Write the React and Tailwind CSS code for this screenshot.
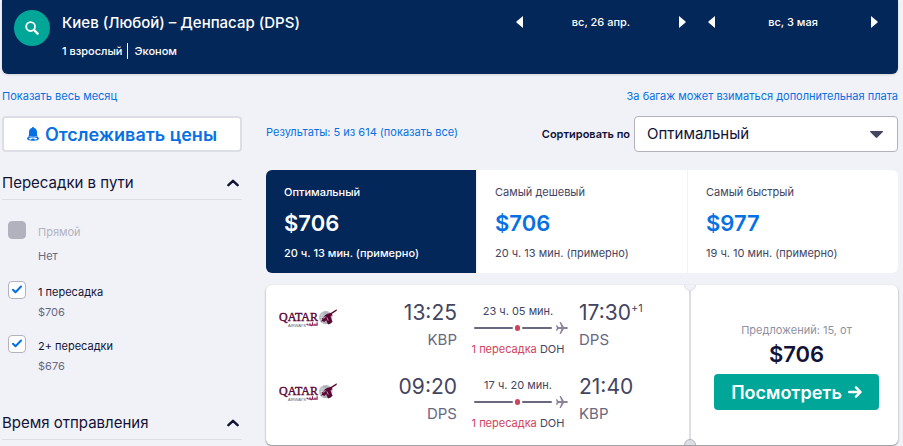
import React, { useState } from 'react';

const legs = [
  {
    depart: '13:25',
    from: 'KBP',
    duration: '23 ч. 05 мин.',
    arrive: '17:30',
    extraDays: '+1',
    to: 'DPS',
  },
  {
    depart: '09:20',
    from: 'DPS',
    duration: '17 ч. 20 мин.',
    arrive: '21:40',
    to: 'KBP',
  },
];

const sortTabs = [
  { id: 'best', label: 'Оптимальный', price: '$706', time: '20 ч. 13 мин. (примерно)' },
  { id: 'cheapest', label: 'Самый дешевый', price: '$706', time: '20 ч. 13 мин. (примерно)' },
  { id: 'fastest', label: 'Самый быстрый', price: '$977', time: '19 ч. 10 мин. (примерно)' },
];

const DatePicker = ({ date }) => (
  <div className="flex w-[170px] items-center justify-between text-white">
    <button type="button" aria-label="Предыдущий день" className="flex h-6 items-center">
      <svg width="7" height="12" viewBox="0 0 7 12" fill="currentColor">
        <path d="M7 0v12L0.5 6.6a0.9 0.9 0 0 1 0-1.2z" />
      </svg>
    </button>
    <span className="text-[11px] font-medium">{date}</span>
    <button type="button" aria-label="Следующий день" className="flex h-6 items-center">
      <svg width="7" height="12" viewBox="0 0 7 12" fill="currentColor">
        <path d="M0 0v12l6.5-5.4a0.9 0.9 0 0 0 0-1.2z" />
      </svg>
    </button>
  </div>
);

const SearchHeader = () => (
  <header className="flex h-[74px] items-start justify-between rounded-b-md bg-[#042759] pt-[10px] pr-5 pl-3 text-white shadow">
    <div className="flex">
      <button
        type="button"
        aria-label="Поиск"
        className="flex h-9 w-9 items-center justify-center rounded-full bg-[#00a698]"
      >
        <svg width="14" height="14" viewBox="0 0 14 14" fill="none" stroke="currentColor">
          <circle cx="5.6" cy="5.6" r="4.4" strokeWidth="1.8" />
          <path d="M9 9l3.6 3.6" strokeWidth="2.4" strokeLinecap="round" />
        </svg>
      </button>
      <div className="ml-3 pt-px">
        <h1 className="text-[15px] leading-6 font-medium">Киев (Любой) – Денпасар (DPS)</h1>
        <p className="mt-2 flex items-center text-[11px] leading-4 font-medium">
          <span className="border-r border-white pr-[5px]">1 взрослый</span>
          <span className="pl-[6px]">Эконом</span>
        </p>
      </div>
    </div>
    <div className="flex gap-[22px]">
      <DatePicker date="вс, 26 апр." />
      <DatePicker date="вс, 3 мая" />
    </div>
  </header>
);

const FilterHeading = ({ children }) => (
  <h2 className="border-b border-[#dddde5]">
    <button
      type="button"
      className="flex h-8 w-full items-center justify-between pr-[3px] text-left text-[15px] text-[#111236]"
    >
      {children}
      <svg width="12" height="8" viewBox="0 0 12 8" fill="none" stroke="currentColor">
        <path d="M1.4 6.2L6 1.8l4.6 4.4" strokeWidth="2.4" strokeLinecap="round" strokeLinejoin="round" />
      </svg>
    </button>
  </h2>
);

const StopFilter = ({ id, label, price, checked, disabled, onChange }) => (
  <div className="flex gap-3">
    <span className="relative flex h-[18px] w-[18px]">
      <input
        id={id}
        type="checkbox"
        checked={checked}
        disabled={disabled}
        onChange={onChange}
        className="h-[18px] w-[18px] appearance-none rounded border border-[#b2b2bf] bg-white disabled:bg-[#b2b2bf]"
      />
      {checked && (
        <svg
          className="pointer-events-none absolute top-1 left-1"
          width="10"
          height="9"
          viewBox="0 0 10 9"
          fill="none"
          stroke="#0770e3"
        >
          <path d="M1 4.8l2.5 2.4L9 1.5" strokeWidth="2" strokeLinecap="round" strokeLinejoin="round" />
        </svg>
      )}
    </span>
    <div className="pt-[2px] text-[11px]">
      <label htmlFor={id} className={`block leading-[18px] ${disabled ? 'text-[#b2b2bf]' : 'text-[#111236]'}`}>
        {label}
      </label>
      <span className={`block leading-[22px] text-[#68697f] ${disabled ? 'mt-1' : ''}`}>{price}</span>
    </div>
  </div>
);

const Sidebar = () => {
  const [oneStop, setOneStop] = useState(true);
  const [twoStops, setTwoStops] = useState(true);

  return (
    <aside className="w-60 shrink-0">
      <button
        type="button"
        className="flex h-9 w-full items-center justify-center gap-[6px] rounded border-2 border-[#dddde5] bg-white text-[18px] font-semibold text-[#0770e3]"
      >
        <svg width="12" height="14" viewBox="0 0 12 14" fill="currentColor">
          <path d="M6 0c.7 0 1.1.4 1.2 1C9 1.6 10 3.1 10 5v2.4c0 1 .6 1.8 1.4 2.5C9.9 9.2 8 8.9 6 8.9s-3.9.3-5.4 1C1.4 9.2 2 8.4 2 7.400V5c0-1.900 1-3.400 2.800-4C4.900.4 5.300 0 6 0z" />
          <path d="M6 9.3c3.3 0 6 .9 6 2.2s-2.700 2.300-6 2.300-6-1-6-2.300 2.700-2.200 6-2.200zm0 1.100c-2.500 0-4.300.5-4.300 1.100 0 .5 1 .9 2.600 1.100.2-.6.9-1 1.700-1s1.500.4 1.700 1c1.600-.2 2.600-.6 2.600-1.100 0-.6-1.800-1.100-4.300-1.100z" />
        </svg>
        Отслеживать цены
      </button>

      <div className="mt-[15px]">
        <FilterHeading>Пересадки в пути</FilterHeading>
        <div className="mt-[21px] flex flex-col gap-3 pl-[6px]">
          <div className="pb-[2px]">
            <StopFilter id="stops-direct" label="Прямой" price="Нет" checked={false} disabled />
          </div>
          <StopFilter
            id="stops-one"
            label="1 пересадка"
            price="$706"
            checked={oneStop}
            onChange={(e) => setOneStop(e.target.checked)}
          />
          <StopFilter
            id="stops-two"
            label="2+ пересадки"
            price="$676"
            checked={twoStops}
            onChange={(e) => setTwoStops(e.target.checked)}
          />
        </div>
      </div>

      <div className="mt-[30px]">
        <FilterHeading>Время отправления</FilterHeading>
      </div>
    </aside>
  );
};

const QatarLogo = () => (
  <svg width="58" height="18" viewBox="0 0 58 18" role="img" aria-label="Qatar Airways">
    <text
      x="0"
      y="11.5"
      fontFamily="Liberation Serif, serif"
      fontSize="12"
      fill="#5c0632"
      stroke="#5c0632"
      strokeWidth="0.4"
    >
      QATAR
    </text>
    <text x="9" y="17.6" fontFamily="Liberation Sans, sans-serif" fontSize="4" fill="#5b5b6b">
      AIRWAYS
    </text>
    <path
      d="M27.5 16v-1.2h1.500v.8h1.500v-1.400h1v1.400h1.500v-2.400h1v2.400h1.500v-1h1v1h1v-2.400h1.200v3.500H33l-.8.8-.8-.8z"
      fill="#8b2252"
    />
    <circle cx="46.8" cy="8.600" r="6.700" fill="#adb4ba" />
    <path
      d="M41 6h11M40.300 8.600h13M41 11.300h11M44 3c-2 3.500-2 8 0 11.500M49 3c2 3.500 2 8 0 11.500"
      stroke="#dfe2e5"
      strokeWidth="0.6"
      fill="none"
    />
    {/* oryx head and horns */}
    <path
      d="M57.600.2l.2 1.500-5 3.300 1 1.300-2.200.6c.2 2 1 3.700 2 5.600-1 1.500-2.600 2.600-4.600 3l-1.800-4.300-2.200 2-.8-1.300-2.700.9 2-2.300-1-.8 2.600-1.500.8-2 2.600-1.500 3.200-.7z"
      fill="#5c0632"
    />
    <path d="M44.500 9.800l2.300-2.400M48 8.500l1.200 3" stroke="#fff" strokeWidth="0.6" fill="none" />
  </svg>
);

const Leg = ({ leg }) => (
  <div className="flex h-[74px] items-start">
    <div className="w-20 pt-[10px]">
      <QatarLogo />
    </div>
    <div className="flex-1 text-right">
      <div className="text-[21px] leading-7 text-[#444560]">{leg.depart}</div>
      <div className="text-[15px] leading-[26px] text-[#68697f]">{leg.from}</div>
    </div>
    <div className="w-[122px] px-[11px] pt-1 text-center text-[11px]">
      <div className="leading-4 text-[#444560]">{leg.duration}</div>
      <div className="ml-[6px] flex h-[18px] items-center">
        <span className="h-[2px] w-[39px] rounded-full bg-[#68697f]" />
        <span className="mx-[2px] h-[6px] w-[6px] rounded-full bg-[#d1435b]" />
        <span className="h-[2px] w-[30px] rounded-full bg-[#68697f]" />
        <svg className="ml-1" width="12" height="12" viewBox="0 0 12 12" fill="#8a8399">
          <path d="M0 3.200h1.100L2.500 5h3L3.600 0h1.300L8 5h2.600c.8 0 1.400.4 1.400 1s-.6 1-1.400 1H8l-3.100 5H3.600l1.900-5h-3L1.100 8.800H0L.8 6z" />
        </svg>
      </div>
      <div className="mt-1 leading-4 whitespace-nowrap text-[#444560]">
        <span className="text-[#d1435b]">1 пересадка</span> DOH
      </div>
    </div>
    <div className="w-[110px]">
      <div className="flex text-[21px] leading-7 text-[#444560]">
        {leg.arrive}
        {leg.extraDays && <sup className="top-0 text-[11px] leading-[18px]">{leg.extraDays}</sup>}
      </div>
      <div className="text-[15px] leading-[26px] text-[#68697f]">{leg.to}</div>
    </div>
  </div>
);

const Ticket = () => (
  <article className="relative mt-3 flex h-40 overflow-hidden rounded-md bg-white shadow-[0_1px_2px_rgba(0,0,0,0.45)]">
    <div className="flex-1 pt-[14px] pl-[13px]">
      {legs.map((leg) => (
        <Leg key={leg.depart} leg={leg} />
      ))}
    </div>
    <div className="relative flex w-[209px] flex-col items-center border-l-2 border-[#dddde5] pt-9 pr-[19px] pl-[23px]">
      <span className="absolute -top-[6px] -left-[7px] h-3 w-3 rounded-full border border-[#dddde5] bg-[#f1f2f8]" />
      <span className="absolute -bottom-[6px] -left-[7px] h-3 w-3 rounded-full border border-[#b2b2bf] bg-[#dddde5]" />
      <span className="text-[11px] leading-[18px] text-[#8f90a0]">Предложений: 15, от</span>
      <span className="text-[22px] leading-[30px] font-semibold text-[#111236]">$706</span>
      <button
        type="button"
        className="mt-[5px] flex h-9 w-full items-center justify-center gap-[6px] rounded bg-[#00a698] text-[18px] font-semibold text-white"
      >
        Посмотреть
        <svg width="14" height="12" viewBox="0 0 14 12" fill="none" stroke="currentColor">
          <path d="M1.2 6h11M8 1.4L12.6 6 8 10.6" strokeWidth="2.4" strokeLinecap="round" strokeLinejoin="round" />
        </svg>
      </button>
    </div>
  </article>
);

const Results = () => {
  const [activeTab, setActiveTab] = useState('best');

  return (
    <main className="min-w-0 flex-1">
      <div className="flex h-9 items-center justify-between">
        <a href="#all" className="pb-1 text-[11px] text-[#0770e3]">
          Результаты: 5 из 614 (показать все)
        </a>
        <div className="flex items-center gap-1">
          <label htmlFor="sort" className="text-[11px] font-semibold text-[#111236]">
            Сортировать по
          </label>
          <div className="relative">
            <select
              id="sort"
              value={activeTab}
              onChange={(e) => setActiveTab(e.target.value)}
              className="block h-9 w-[264px] appearance-none rounded border border-[#b2b2bf] bg-white pl-3 text-[15px] text-[#111236]"
            >
              {sortTabs.map((tab) => (
                <option key={tab.id} value={tab.id}>
                  {tab.label}
                </option>
              ))}
            </select>
            <svg
              className="pointer-events-none absolute top-[15px] right-[15px]"
              width="13"
              height="7"
              viewBox="0 0 13 7"
              fill="#444560"
            >
              <path d="M.5 0h12a.5.5 0 0 1 .3.9L7.3 6.600a1.200 1.200 0 0 1-1.600 0L.2.900A.5.5 0 0 1 .5 0z" />
            </svg>
          </div>
        </div>
      </div>

      <div className="mt-[18px] flex h-[103px] overflow-hidden rounded-md bg-white">
        {sortTabs.map((tab) => {
          const active = tab.id === activeTab;
          return (
            <button
              key={tab.id}
              type="button"
              onClick={() => setActiveTab(tab.id)}
              className={`flex flex-1 flex-col border-r border-[#f1f2f8] pt-[13px] pl-[18px] text-left last:border-r-0 ${
                active ? 'bg-[#042759] font-medium text-white' : 'text-[#444560]'
              }`}
            >
              <span className="text-[11px] leading-[18px]">{tab.label}</span>
              <span className={`mt-[7px] text-[22px] leading-[30px] font-semibold ${active ? '' : 'text-[#0770e3]'}`}>
                {tab.price}
              </span>
              <span className="mt-[6px] text-[11px] leading-[18px]">{tab.time}</span>
            </button>
          );
        })}
      </div>

      <Ticket />
    </main>
  );
};

export default function App() {
  return (
    <div className="min-h-screen bg-[#f1f2f8] pr-[5px] pl-[2px] font-['Inter','Liberation_Sans',sans-serif]">
      <SearchHeader />
      <div className="mt-[14px] flex items-center justify-between text-[11px] leading-4 text-[#0770e3]">
        <a href="#month">Показать весь месяц</a>
        <a href="#baggage">За багаж может взиматься дополнительная плата</a>
      </div>
      <div className="mt-3 flex gap-6">
        <Sidebar />
        <Results />
      </div>
    </div>
  );
}
